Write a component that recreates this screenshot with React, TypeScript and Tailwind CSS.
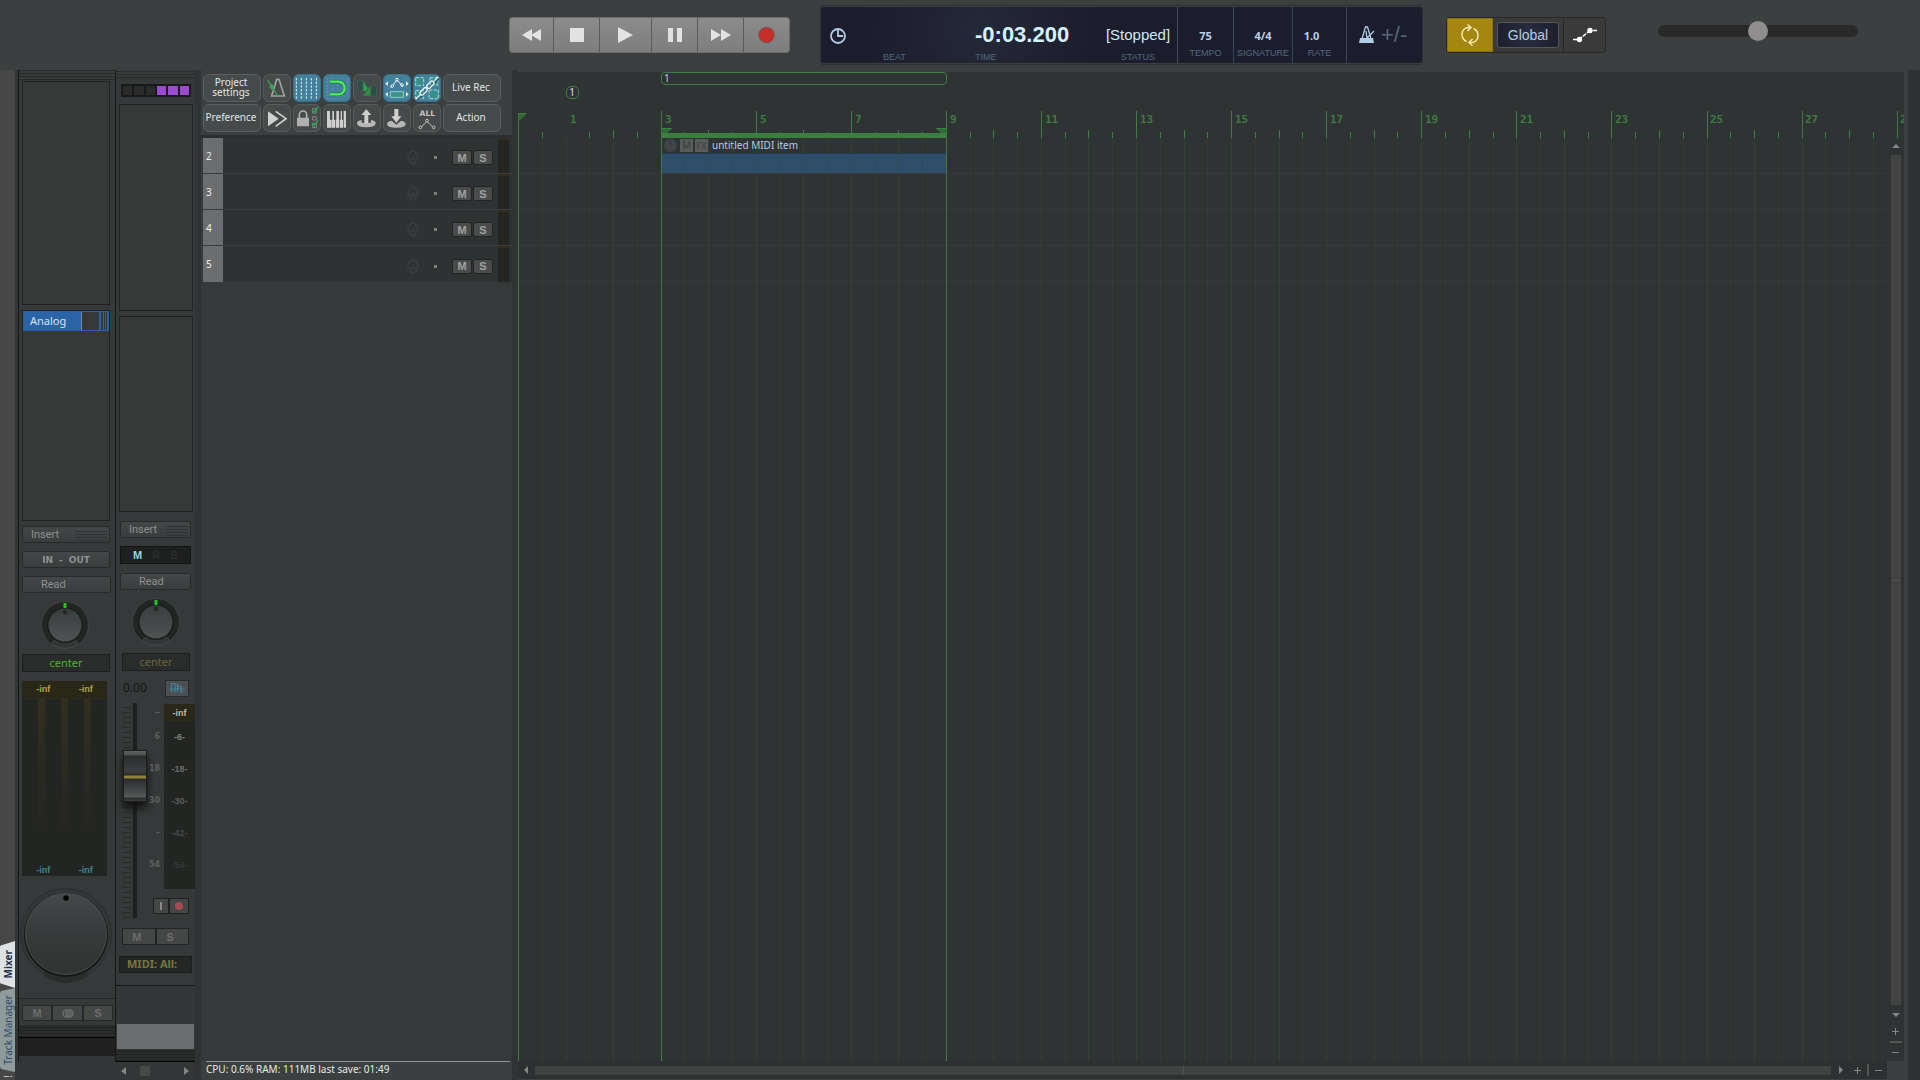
import { useState } from 'react';
import type { ReactNode } from 'react';

const BEAT = 23.77;
const beats = Array.from({ length: 160 }, (_, i) => i);
const bars = Array.from({ length: 14 }, (_, i) => i * 2 + 1);
const beatX = (i: number) => Math.round(i * BEAT) + 0.5;

const tracks = [2, 3, 4, 5];
const scaleMarks = ['6', '18', '30', '–', '54'];
const meterMarks = ['-6-', '-18-', '-30-', '-42-', '-54-'];
const meterShades = ['text-[#7d7d7d]', 'text-[#6d6d6d]', 'text-[#5c5e5d]', 'text-[#484b4a]', 'text-[#383a39]'];

const HATCH = 'bg-[repeating-linear-gradient(0deg,#2a2c2c_0px,#2a2c2c_1px,#383b3b_1px,#383b3b_3px)]';

/* ---------- transport ---------- */

function TransportButton({ label, width, children }: { label: string; width: string; children: ReactNode }) {
  return (
    <button
      aria-label={label}
      className={`${width} flex h-full items-center justify-center border-r border-[#5c5c5c] bg-linear-to-b from-[#8c8c8c] to-[#7d7d7d] last:border-r-0`}
    >
      {children}
    </button>
  );
}

function Transport() {
  return (
    <div className="flex h-9 overflow-hidden rounded-[3px] border border-[#6a6a6a]">
      <TransportButton label="Rewind" width="w-[44px]">
        <svg width="20" height="12" fill="#e2e2e2"><path d="M10 0v12L0 6zM19 0v12L9 6z" /></svg>
      </TransportButton>
      <TransportButton label="Stop" width="w-[46px]">
        <svg width="14" height="14" fill="#e2e2e2"><path d="M0 0h14v14H0z" /></svg>
      </TransportButton>
      <TransportButton label="Play" width="w-[52px]">
        <svg width="15" height="16" fill="#e2e2e2"><path d="M0 0l15 8L0 16z" /></svg>
      </TransportButton>
      <TransportButton label="Pause" width="w-[46px]">
        <svg width="14" height="14" fill="#e2e2e2"><path d="M0 0h5v14H0zM9 0h5v14H9z" /></svg>
      </TransportButton>
      <TransportButton label="Forward" width="w-[46px]">
        <svg width="20" height="12" fill="#e2e2e2"><path d="M0 0l10 6L0 12zM10 0l10 6-10 6z" /></svg>
      </TransportButton>
      <TransportButton label="Record" width="w-[45px]">
        <svg width="18" height="18"><circle cx="8.500" cy="9" r="7.8" fill="#c62f28" stroke="#6b5a5a" strokeWidth="1" /></svg>
      </TransportButton>
    </div>
  );
}

function ClockCell({ label, width, value }: { label: string; width: string; value: ReactNode }) {
  return (
    <div className={`${width} flex flex-col items-center justify-between border-r border-[#34465a] bg-[#1b1d2c] pt-[21px] pb-1`}>
      <span className="font-['Noto_Sans'] text-[11px] leading-4 font-bold text-[#bdd0ea]">{value}</span>
      <span className="text-[9px] leading-3 text-[#54687c]">{label}</span>
    </div>
  );
}

function Clock() {
  return (
    <div className="flex h-[60px] rounded-[3px] border border-[#2e3131] py-px">
      <div className="grid w-[357px] grid-cols-[62px_92px_120px_1fr] rounded-l-[3px] border-r border-[#3b4a55] bg-[radial-gradient(circle_at_45%_40%,#252838,#1b1d2c_60%)] pt-3 pb-1 text-[9px] leading-3 text-[#54687c]">
        <svg width="16" height="16" className="mt-[9px] ml-[9px]" fill="none" stroke="#b4cbe4" strokeWidth="1.8">
          <circle cx="8" cy="8" r="7" />
          <path d="M8 2v6h5" />
        </svg>
        <span className="self-end">BEAT</span>
        <div className="flex flex-col justify-between">
          <span className="text-[22px] leading-8 font-bold whitespace-nowrap text-[#d3f3ff]">-0:03.200</span>
          <span>TIME</span>
        </div>
        <div className="flex flex-col items-center justify-between pl-1">
          <span className="text-[15px] leading-8 text-[#d3e8f5]">[Stopped]</span>
          <span>STATUS</span>
        </div>
      </div>
      <ClockCell label="TEMPO" width="w-[56px]" value="75" />
      <ClockCell label="SIGNATURE" width="w-[59px]" value="4/4" />
      <ClockCell label="RATE" width="w-[54px]" value={<span className="pr-4">1.0</span>} />
      <button aria-label="Metronome" className="flex w-[75px] items-center gap-1.5 rounded-r-[3px] bg-[#1b1d2c] pl-3">
        <svg width="16" height="18" fill="none" stroke="#b4cbe4" strokeWidth="1.3">
          <path d="M2 16L6.500 1h2L13 16" />
          <path d="M1 12h13l1 5H0z" fill="#b4cbe4" stroke="none" />
          <path d="M7 5l1 7 7-7" />
        </svg>
        <span className="text-[22px] leading-6 text-[#54687c]">+/-</span>
      </button>
    </div>
  );
}

function GlobalGroup() {
  return (
    <div className="flex h-9 overflow-hidden rounded-[3px] border border-[#272727] bg-[#3a3a3a]">
      <button aria-label="Repeat" className="flex w-[46px] items-center justify-center border border-[#8b7310] bg-[#a48611]">
        <svg width="22" height="22" fill="none" stroke="#f6ecc0" strokeWidth="1.4">
          <path d="M7.500 17.500A7.600 7.600 0 0 1 6 4.500Q8 3.200 11.500 3.500" />
          <path d="M14.500 4.500A7.600 7.600 0 0 1 16 17.500Q14 18.800 10.500 18.500" />
          <path d="M8.500 .5l3.500 3-3.500 3.500M13.500 15l-3.500 3.500 3.500 3" />
        </svg>
      </button>
      <div className="flex w-[71px] items-center border-r border-[#272727] px-1">
        <button className="h-[26px] w-full rounded-[3px] border border-[#565656] bg-[radial-gradient(circle,#2a2f42,#1b1d2c)] text-[14px] leading-6 text-[#b4cbe4]">
          Global
        </button>
      </div>
      <button aria-label="Envelope mode" className="flex w-[41px] items-center justify-center">
        <svg width="24" height="16" stroke="#fff" strokeWidth="1.400" fill="#fff">
          <path d="M0 12.500h4M6 12.500L17 3.500M20 3.500h4" strokeDasharray="4 1" />
          <circle cx="6.500" cy="12.500" r="2" />
          <circle cx="17" cy="3.500" r="2" />
        </svg>
      </button>
    </div>
  );
}

function Header() {
  const [rate, setRate] = useState(50);
  return (
    <header className="flex h-[70px] shrink-0 items-center bg-[#3b3f3f] pl-[509px]">
      <Transport />
      <div className="ml-[30px]">
        <Clock />
      </div>
      <div className="ml-[23px]">
        <GlobalGroup />
      </div>
      <input
        type="range"
        aria-label="Play rate"
        value={rate}
        onChange={(e) => setRate(Number(e.target.value))}
        className="mb-2 ml-[52px] h-3 w-[200px] appearance-none rounded-full bg-[#292929] [&::-webkit-slider-thumb]:size-5 [&::-webkit-slider-thumb]:appearance-none [&::-webkit-slider-thumb]:rounded-full [&::-webkit-slider-thumb]:bg-[#8f8d8d]"
      />
    </header>
  );
}

/* ---------- mixer ---------- */

function Knob() {
  return (
    <svg width="50" height="48" viewBox="0 0 50 48" className="mx-auto shrink-0">
      <defs>
        <linearGradient id="knob" x1="0" y1="0" x2="0" y2="1">
          <stop offset="0" stopColor="#3a3d3e" />
          <stop offset="1" stopColor="#505254" />
        </linearGradient>
      </defs>
      <circle cx="25" cy="24" r="23.500" fill="#232424" stroke="#414444" />
      <path d="M13 40l-1 3.500a24 24 0 0 0 26 0L37 40z" fill="#333636" stroke="#4a4d4d" strokeWidth=".7" />
      <circle cx="25" cy="24" r="18" fill="#1b1c1c" />
      <circle cx="25" cy="24" r="16.500" fill="url(#knob)" />
      <circle cx="25" cy="11" r="2.300" fill="#262828" />
      <path d="M23.500 2h3v5h-3z" fill="#22c322" />
    </svg>
  );
}

function BigKnob() {
  return (
    <svg width="96" height="98" viewBox="0 0 96 98" className="mx-auto shrink-0">
      <defs>
        <linearGradient id="bigknob" x1="0" y1="0" x2="0" y2="1">
          <stop offset="0" stopColor="#454949" />
          <stop offset=".5" stopColor="#373a3a" />
          <stop offset="1" stopColor="#313333" />
        </linearGradient>
      </defs>
      <circle cx="48" cy="48" r="45.500" fill="#333636" stroke="#2c2f2f" />
      <path d="M28 84l-2 6q22 14 44 0l-2-6z" fill="#2b2d2d" />
      <circle cx="48" cy="49" r="42" fill="#161717" />
      <circle cx="48" cy="48" r="40.500" fill="url(#bigknob)" stroke="#565a5a" strokeWidth=".7" />
      <circle cx="48" cy="12" r="2.800" fill="#050505" />
    </svg>
  );
}

function StripButton({ children, className = '' }: { children: ReactNode; className?: string }) {
  return (
    <button
      className={`h-[17px] shrink-0 rounded-[2px] border border-[#282a2a] bg-linear-to-b from-[#444747] to-[#3a3d3d] font-['Roboto'] text-[11px] leading-[14px] text-[#8e9191] ${className}`}
    >
      {children}
    </button>
  );
}

function Grip({ width }: { width: string }) {
  return (
    <span className={`h-3 ${width} bg-[repeating-linear-gradient(0deg,#303333_0px,#303333_1px,transparent_1px,transparent_3px)]`} />
  );
}

function MasterMeter() {
  return (
    <div className="mt-[9px] flex h-[195px] w-[85px] shrink-0 flex-col bg-[#232523] text-[9px] font-bold">
      <div className="flex h-[18px] items-center justify-around border-b border-[#302c1c] bg-[#292818] pt-px text-[#aea452]">
        <span>-inf</span>
        <span>-inf</span>
      </div>
      <div className="flex flex-1 justify-between px-4">
        {[0, 1, 2].map((i) => (
          <div key={i} className="h-[140px] w-[7px] bg-linear-to-b from-[#322f1f] to-[#232523]" />
        ))}
      </div>
      <div className="flex h-3 items-center justify-around pt-px text-[#3d8693]">
        <span>-inf</span>
        <span>-inf</span>
      </div>
    </div>
  );
}

function MasterStrip() {
  return (
    <section aria-label="Master" className="flex w-[98px] flex-col border-x border-[#161717] bg-[#363939]">
      <div className={`h-[10px] shrink-0 ${HATCH}`} />
      <div className="flex flex-1 flex-col pt-px pl-[3px]">
        <div className="h-[224px] w-[88px] shrink-0 border border-[#202222] bg-[#373939]" />
        <div className="mt-[5px] w-[88px] flex-1 border border-[#202222] bg-[#373939]">
          <div className="flex h-5 border border-[#2a62a4]">
            <button className="w-[58px] border-r border-[#7d8a99] bg-[#2a64a6] pl-1.5 text-left font-['Noto_Sans'] text-[11px] leading-4 text-[#d5e3f5]">
              Analog
            </button>
            <span className="w-[17px]" />
            <span className="w-0.5 bg-[#2a62a4]" />
            <span className="ml-0.5 flex-1 bg-[repeating-linear-gradient(90deg,#2a62a4_0px,#2a62a4_1px,#303538_1px,#303538_2px)]" />
          </div>
        </div>
        <StripButton className="mt-[5px] flex w-[88px] items-center justify-between pr-0.5 pl-2">
          Insert <Grip width="w-8" />
        </StripButton>
        <StripButton className="mt-2 w-[88px]">
          <span className="flex justify-center gap-1.5 font-['DejaVu_Sans'] text-[9px] font-bold">
            <span>IN</span>
            <span>-</span>
            <span>OUT</span>
          </span>
        </StripButton>
        <StripButton className="mt-2 w-[89px] pl-[18px] text-left">Read</StripButton>
        <div className="mt-2 flex w-[86px]">
          <Knob />
        </div>
        <div className="mt-[5px] h-[18px] w-[88px] shrink-0 border border-[#1c1d1d] bg-[#2a2c2c] text-center font-['Noto_Sans'] text-[11px] leading-4 text-[#4bb32f]">
          center
        </div>
        <MasterMeter />
        <div className="mt-[10px] flex w-[88px] justify-center">
          <BigKnob />
        </div>
      </div>
      <div className="mt-[14px] flex shrink-0 border-t border-[#222424] pt-1.5 pl-[3px]">
        <button className="h-4 w-[30px] border border-[#262828] bg-[#454747] text-[11px] leading-3 font-bold text-[#6b6d6d]">M</button>
        <button aria-label="Mono" className="flex h-4 w-[31px] items-center justify-center border border-[#262828] bg-[#454747]">
          <svg width="12" height="9" fill="none" stroke="#6b6d6d" strokeWidth="1.500">
            <circle cx="4.500" cy="4.500" r="3.500" />
            <circle cx="7.500" cy="4.500" r="3.500" fill="#5d5f5f" />
          </svg>
        </button>
        <button className="h-4 w-[30px] border border-[#262828] bg-[#454747] text-[11px] leading-3 font-bold text-[#6b6d6d]">S</button>
      </div>
      <div className="mt-1 h-3 shrink-0 bg-[repeating-linear-gradient(0deg,#222424_0px,#222424_1px,#2b2d2d_1px,#2b2d2d_3px)]" />
      <div className="h-[19px] shrink-0 border-t border-black bg-[#202020]" />
      <div className="h-1.5 shrink-0 bg-[#333636]" />
    </section>
  );
}

function Fader() {
  const [level, setLevel] = useState(71);
  return (
    <div className="flex h-[215px] w-[33px] justify-end">
      <div className="h-full w-2 bg-[repeating-linear-gradient(180deg,#363939_0px,#363939_4px,#292b2b_4px,#292b2b_5px)]" />
      <input
        type="range"
        aria-label="Track volume"
        value={level}
        onChange={(e) => setLevel(Number(e.target.value))}
        className="-ml-2 h-[215px] w-6 appearance-none bg-[linear-gradient(90deg,transparent_10px,#1a1b1b_10px,#222_14px,transparent_14px)] [direction:rtl] [writing-mode:vertical-lr] [&::-webkit-slider-thumb]:h-[52px] [&::-webkit-slider-thumb]:w-6 [&::-webkit-slider-thumb]:appearance-none [&::-webkit-slider-thumb]:border [&::-webkit-slider-thumb]:border-[#1a1b1b] [&::-webkit-slider-thumb]:bg-[linear-gradient(180deg,#5f6364_0px,#4b4f50_4px,#2b2d2d_5px,#3c3f40_20px,#2a2c2c_24px,#8f8335_25px,#8f8335_27px,#2a2c2c_28px,#55595a_46px,#2a2c2c_47px,#3b3d3e_50px)] [&::-webkit-slider-thumb]:shadow-[0_6px_8px_#111]"
      />
      <span className="w-0.5" />
    </div>
  );
}

function TrackStrip() {
  return (
    <section aria-label="Track 1" className="flex w-[79px] flex-col bg-[#363939]">
      <div className={`h-2 shrink-0 ${HATCH}`} />
      <div className="flex flex-1 flex-col pt-1.5 pr-0.5 pl-[3px]">
        <div className="mx-0.5 flex h-[13px] shrink-0 gap-0.5 border-2 border-[#181919] bg-[#181919]">
          {[0, 1, 2].map((i) => (
            <span key={i} className="flex-1 bg-[#2b2b2b]" />
          ))}
          {[3, 4, 5].map((i) => (
            <span key={i} className="flex-1 bg-[#9a4bd0]" />
          ))}
        </div>
        <div className="mt-[7px] h-[207px] shrink-0 border border-[#202222] bg-[#373939]" />
        <div className="mt-[5px] flex-1 border border-[#202222] bg-[#373939]" />
        <StripButton className="mt-[9px] mr-0.5 ml-px flex items-center justify-between pr-0.5 pl-2">
          Insert <Grip width="w-[22px]" />
        </StripButton>
        <div className="mt-2 mr-0.5 ml-px flex h-[18px] shrink-0 gap-2.5 border border-[#141515] bg-[#1e2020] pl-3 text-[11px] leading-4 font-bold text-[#2b2d2e]">
          <span className="text-[#a9cbe2]">M</span>
          <span>R</span>
          <span>S</span>
        </div>
        <StripButton className="mt-[9px] mr-0.5 ml-px pl-[18px] text-left">Read</StripButton>
        <div className="mt-2 flex">
          <Knob />
        </div>
        <div className="mx-[3px] mt-[7px] h-[18px] shrink-0 border border-[#1c1d1d] bg-[#2a2c2c] text-center font-['Noto_Sans'] text-[11px] leading-4 text-[#68663a]">
          center
        </div>
        <div className="mx-1 mt-2 flex h-[18px] shrink-0 items-center justify-between">
          <span className="font-['Noto_Sans'] text-[12px] text-[#121313]">0.00</span>
          <button aria-label="Envelopes" className="flex h-[17px] w-6 items-center justify-center border border-[#2a2c2c] bg-[#4c5052]">
            <svg width="16" height="12" fill="none" stroke="#3f88a3" strokeWidth="1.200">
              <path d="M0 7h16" strokeWidth=".8" />
              <path d="M2.500 10V1.500H6V10M8.500 1.500V10M8.500 4.500H12V10h2" />
            </svg>
          </button>
        </div>
      </div>
      <div className="mt-1.5 flex shrink-0">
        <Fader />
        <div className="flex flex-1 flex-col">
          <div className="flex h-[186px] pt-px text-[9px] font-bold">
            <div className="w-[15px] pr-1 text-right text-[#5c5f5f]">
              <div className="h-[17px] leading-4">–</div>
              {scaleMarks.map((m) => (
                <div key={m} className="h-8 font-['DejaVu_Sans'] text-[8px] leading-8">{m}</div>
              ))}
            </div>
            <div className="flex-1 bg-[#232523] text-center">
              <div className="h-[17px] border-b border-[#302c1c] bg-[#292818] leading-[18px] text-[#b9b9b0]">-inf</div>
              {meterMarks.map((m, i) => (
                <div key={m} className={`h-8 leading-8 ${meterShades[i]}`}>{m}</div>
              ))}
            </div>
          </div>
          <div className="mt-[9px] ml-1 flex h-4">
            <button aria-label="Input monitor" className="flex w-4 items-center justify-center border border-[#1f2121] bg-[#454747]">
              <span className="h-2 w-0.5 bg-[#8a8a8a]" />
            </button>
            <button aria-label="Record arm" className="flex w-5 items-center justify-center border border-[#1f2121] bg-[#454747]">
              <span className="size-2 rounded-full bg-[#a64b50]" />
            </button>
          </div>
        </div>
      </div>
      <div className="mx-1.5 mt-[10px] flex h-[17px] shrink-0">
        <button className="w-1/2 border border-[#222424] bg-[#454747] pr-1 text-[11px] leading-3 font-bold text-[#6b6d6d]">M</button>
        <button className="w-1/2 border border-[#222424] bg-[#454747] pr-1 text-[11px] leading-3 font-bold text-[#6b6d6d]">S</button>
      </div>
      <div className="mx-[3px] mt-[11px] h-[17px] shrink-0 border border-[#1c1d1d] bg-[#252727] pl-[7px] font-['Noto_Sans'] text-[11px] leading-[14px] font-bold whitespace-nowrap text-[#77763f]">
        MIDI: All:
      </div>
      <div className="mt-3 h-[39px] shrink-0 border-t border-[#161717] bg-[#343737]" />
      <div className="mr-px ml-px h-[25px] shrink-0 bg-[#6a6c6d]" />
      <div className="h-[13px] shrink-0 border-b border-black bg-[repeating-linear-gradient(0deg,#222424_0px,#222424_1px,#2b2d2d_1px,#2b2d2d_3px)]" />
    </section>
  );
}

function Mixer() {
  return (
    <aside className="flex w-[195px] shrink-0 bg-[#333636]">
      <nav className="flex w-[15px] flex-col justify-end bg-[#474747] font-['Noto_Sans']">
        <button className="flex h-[47px] items-center justify-center rounded-l-md bg-[#dfe2e2] text-[#22304f] [clip-path:polygon(0_10%,100%_0,100%_100%,0_90%)]">
          <span className="rotate-180 text-[10px] leading-[14px] font-bold [writing-mode:vertical-rl]">Mixer</span>
        </button>
        <button className="flex h-[84px] items-center justify-center rounded-l-md bg-[#8e9b9a] text-[#2f4a6e] [clip-path:polygon(0_4%,100%_0,100%_100%,0_96%)]">
          <span className="rotate-180 text-[10px] leading-[14px] whitespace-nowrap [writing-mode:vertical-rl]">Track Manager</span>
        </button>
        <div className="flex h-2 items-center justify-center">
          <span className="rotate-180 text-[10px] leading-[14px] text-[#d5d5d5] [writing-mode:vertical-rl]">!</span>
        </div>
      </nav>
      <div className="flex flex-1 flex-col pl-[3px]">
        <div className="flex flex-1">
          <MasterStrip />
          <TrackStrip />
        </div>
        <div className="flex h-[18px] shrink-0 items-center justify-between pr-1.5 pl-[103px]">
          <svg width="5" height="8" fill="#848686"><path d="M5 0v8L0 4z" /></svg>
          <span className="mr-5 size-2.5 bg-[#484a4a]" />
          <svg width="5" height="8" fill="#848686"><path d="M0 0l5 4-5 4z" /></svg>
        </div>
      </div>
    </aside>
  );
}

/* ---------- track panel ---------- */

function TextTool({ children }: { children: ReactNode }) {
  return (
    <button className="flex items-center justify-center rounded-md border border-[#5a5f5f] bg-[#454a4a] pr-0.5 pb-0.5 font-['Noto_Sans'] text-[10px] leading-[10px] text-[#e3e6e6]">
      {children}
    </button>
  );
}

function IconTool({ label, active, children }: { label: string; active?: boolean; children: ReactNode }) {
  return (
    <button
      aria-label={label}
      className={`overflow-hidden rounded-md border ${active ? 'border-[#3a7189] bg-[#43809c]' : 'border-[#5a5c5c] bg-[#474a4a]'}`}
    >
      <svg viewBox="3 3 78 78" className="size-full" fill="none">
        {children}
      </svg>
    </button>
  );
}

function Toolbar() {
  return (
    <div className="grid h-[62px] grid-cols-[58px_repeat(6,28px)_58px] grid-rows-[28px_28px] gap-0.5 pt-1 pl-0.5">
      <TextTool>
        <span>Project<br />settings</span>
      </TextTool>
      <IconTool label="Metronome">
        <path d="M41 16h7l16 50H26z" stroke="#a0a0a0" strokeWidth="5" />
        <path d="M14 18l30 48" stroke="#35a552" strokeWidth="4" />
        <path d="M26 29l8 9-8 9-8-9z" fill="#35a552" />
      </IconTool>
      <IconTool label="Grid" active>
        <path d="M10 12v62M25 12v62M40 12v62M55 12v62M70 12v62" stroke="#e6f2f6" strokeWidth="3" strokeDasharray="7 4" />
      </IconTool>
      <IconTool label="Snap" active>
        <path d="M14 12v62M29 12v62M44 12v62M59 12v62M74 12v62" stroke="#73a9bf" strokeWidth="2" strokeDasharray="5 5" />
        <path d="M20 23h26a19 19 0 0 1 0 38H20" stroke="#2a6d4d" strokeWidth="11" />
        <path d="M20 23h26a19 19 0 0 1 0 38H20" stroke="#4af15c" strokeWidth="7" />
      </IconTool>
      <IconTool label="Auto crossfade">
        <path d="M13 20h17v30H13zM54 34h17v32H54z" fill="#2d4d48" stroke="#3c6b5d" strokeWidth="2" />
        <path d="M31 20v31h18z" fill="#2fa04d" />
        <path d="M53 32v34H29z" fill="#348c4a" stroke="#474a4a" strokeWidth="2" />
      </IconTool>
      <IconTool label="Move envelope with item" active>
        <path d="M15 22v14l-8-7zM69 22v14l8-7zM15 54v14l-8-7zM69 54v14l8-7z" fill="#eef5f7" />
        <path d="M22 39h4l3-3 12-18 14 14 4 6" stroke="#eef5f7" strokeWidth="3" />
        <circle cx="28" cy="36" r="4" fill="#43809c" stroke="#eef5f7" strokeWidth="3" />
        <circle cx="42" cy="17" r="4" fill="#43809c" stroke="#eef5f7" strokeWidth="3" />
        <circle cx="57" cy="33" r="4" fill="#43809c" stroke="#eef5f7" strokeWidth="3" />
        <path d="M22 53h40v17H22z" fill="#3f8f8c" stroke="#8fd0c6" strokeWidth="3" />
      </IconTool>
      <IconTool label="Item grouping" active>
        <path
          d="M8 11h24v24H8zM51 11h24v22H51zM8 50h24v24H8zM48 48h28v26H48z"
          fill="#37918a"
          stroke="#a5dbd0"
          strokeWidth="3"
          strokeDasharray="10 4"
        />
        <path d="M12 79L79 12" stroke="#2f6073" strokeWidth="6" />
        <g stroke="#eef5f7" strokeWidth="4">
          <path d="M8 76l14-14M64 20L76 8" />
          <rect x="-13" y="-6" width="26" height="12" rx="6" transform="translate(32 52) rotate(-46)" />
          <rect x="-13" y="-6" width="26" height="12" rx="6" transform="translate(52 32) rotate(-46)" />
        </g>
      </IconTool>
      <TextTool>Live Rec</TextTool>

      <TextTool>Preference</TextTool>
      <IconTool label="Scroll view">
        <path d="M15 22l32 22-32 23z" fill="#cfcfcf" />
        <path d="M38 22l31 22-31 23" stroke="#cfcfcf" strokeWidth="5" />
      </IconTool>
      <IconTool label="Lock">
        <path d="M12 41h36v26H12z" fill="#b0b0b0" />
        <path d="M19 42V32a11 11 0 0 1 22 0v10" stroke="#b0b0b0" strokeWidth="5" />
        <path d="M59 14h11v13H59zM59 38h11v10H59zM59 58h11v13H59z" stroke="#a0a0a0" strokeWidth="2" />
        <path d="M57 18l6 7 12-16M57 57l6 8 12-16" stroke="#2aa84a" strokeWidth="4" />
      </IconTool>
      <IconTool label="Virtual keyboard">
        <path d="M12 21h9v26h3v24H12zM28 21h5v26h3v24H25V47h3zM40 21h8v50H38V47h2zM53 21h4v26h3v24H50V47h3zM62 21h7v50H62z" fill="#cfcfcf" />
      </IconTool>
      <IconTool label="Export">
        <path d="M12 58q0-8 14-10v8h28v-8q14 2 14 10 0 12-28 12T12 58z" fill="#b8b8b8" />
        <path d="M40 16l15 17H46v24H34V33H25z" fill="#cfcfcf" />
      </IconTool>
      <IconTool label="Import">
        <path d="M12 60q0-8 14-10l14 12 14-12q14 2 14 10 0 11-28 11T12 60z" fill="#b8b8b8" />
        <path d="M34 15h12v22h9L40 56 25 37h9z" fill="#cfcfcf" />
      </IconTool>
      <IconTool label="Show all envelopes">
        <text x="43" y="36" textAnchor="middle" fontFamily="DejaVu Sans" fontWeight="bold" fontSize="23" fill="#c4c4c4">ALL</text>
        <path d="M22 72l20-20 20 20" stroke="#c4c4c4" strokeWidth="3" />
        <circle cx="22" cy="70" r="4" fill="#474a4a" stroke="#c4c4c4" strokeWidth="3" />
        <circle cx="42" cy="50" r="4" fill="#474a4a" stroke="#c4c4c4" strokeWidth="3" />
        <circle cx="62" cy="70" r="4" fill="#474a4a" stroke="#c4c4c4" strokeWidth="3" />
      </IconTool>
      <TextTool>Action</TextTool>
    </div>
  );
}

function TrackRow({ n }: { n: number }) {
  return (
    <li className="flex h-9 items-center border-b border-[#3a3d3d] bg-[#2f3232] last:border-b-0">
      <span className="h-full w-5 bg-[#6b6d6e] pl-[3px] font-['Noto_Sans'] text-[10px] leading-9 text-[#f0f0f0]">{n}</span>
      <span className="flex-1" />
      <svg width="12" height="15" className="mt-1" fill="none" stroke="#3a3e3e" strokeWidth="1.500">
        <path d="M1 6q5-10 10 0v3H1zM3 9v3l3 2 3-2V9" />
        <path d="M6 6v5" />
      </svg>
      <span className="mt-1 ml-[15px] size-[3px] bg-[#7c7e7e]" />
      <button className="mt-1 ml-[15px] h-[15px] w-5 rounded-[2px] border border-[#232525] bg-[#4a4c4c] text-[11px] leading-3 font-bold text-[#a0a2a2]">
        M
      </button>
      <button className="mt-1 ml-px h-[15px] w-5 rounded-[2px] border border-[#232525] bg-[#4a4c4c] text-[11px] leading-3 font-bold text-[#a0a2a2]">
        S
      </button>
      <span className="mr-[3px] ml-[5px] h-full w-[11px] border-t-2 border-[#332e1c] bg-[linear-gradient(90deg,#232523_4px,#2b291d_4px,#2b291d_6px,#232523_6px)]" />
    </li>
  );
}

function TrackPanel() {
  return (
    <section aria-label="Tracks" className="flex w-[323px] shrink-0 flex-col border-x-[6px] border-[#303333] bg-[#35393a]">
      <div className="h-[65px] bg-[#3b3f3f]">
        <Toolbar />
      </div>
      <ul className="border-t-[3px] border-[#2b2e2e] pl-0.5">
        {tracks.map((n) => (
          <TrackRow key={n} n={n} />
        ))}
      </ul>
      <div className="flex-1" />
      <div className="h-[19px] bg-[#3b3f3f] pr-0.5 pl-[5px]">
        <div className="border-t border-[#8f9393] font-['Noto_Sans'] text-[10px] leading-[15px] text-[#e6eaea]">
          CPU: 0.6% RAM: 111MB last save: 01:49
        </div>
      </div>
    </section>
  );
}

/* ---------- arrange view ---------- */

function Ruler() {
  return (
    <div className="relative h-[66px] shrink-0 overflow-hidden">
      <svg className="block h-full w-full" stroke="#3c7d40">
        {beats.slice(1).map((i) => {
          if (i === 2) return null;
          const top = i % 4 === 2 ? 39 : i % 2 === 0 ? 58 : 60;
          return <path key={i} d={`M${beatX(i)} ${top}V66`} />;
        })}
        <path d="M.5 41V66" />
        <path d="M0 41.500h8l-8 8z" fill="#2f6a36" />
        <path d="M143.500 66v-9.500h10l-6 5M428.500 66v-9.500h-10l6 5" fill="#2f6a36" />
        <path d="M143 63.500h286" strokeWidth="5" />
      </svg>
      <div className="absolute top-10 left-[52px] flex font-['DejaVu_Sans_Mono'] text-[11px] leading-4 font-bold text-[#3c7d40]">
        {bars.map((b) => (
          <span key={b} className="w-[95px] shrink-0">{b}</span>
        ))}
        <span>29</span>
      </div>
      <div className="absolute top-0 left-[143px] h-[13px] w-[286px] rounded-[4px] border border-[#3c7d40] pl-0.5 font-['Noto_Sans'] text-[10px] leading-[11px] text-[#c5cdd2]">
        1
      </div>
      <div className="absolute top-3.5 left-12 size-[13px] rounded-[5px] border border-[#3c7d40] pr-px text-center font-['Noto_Sans'] text-[10px] leading-[11px] text-[#e0e0e0]">
        1
      </div>
    </div>
  );
}

function MidiItem() {
  return (
    <div className="absolute top-0 left-[143px] flex h-9 w-[286px] flex-col">
      <div className="flex h-[15px] items-center gap-0.5 pl-[3px] font-['Noto_Sans'] text-[10px] leading-[13px]">
        <svg width="13" height="13"><circle cx="6.500" cy="6.500" r="6.500" fill="#424545" /><path d="M6.500 1v5" stroke="#2f3333" /></svg>
        <button className="ml-px h-[13px] w-[13px] bg-[#5a5c5c] text-[#3b3d3d]">M</button>
        <button className="h-[13px] w-[13px] bg-[#5a5c5c] text-[9px] text-[#3b3d3d]">FX</button>
        <span className="ml-0.5 text-[#b9cdea]">untitled MIDI item</span>
      </div>
      <div className="flex-1 rounded-[2px] border border-[#1e3a58] bg-[#2f4e6c]" />
    </div>
  );
}

function Canvas() {
  return (
    <div className="relative flex-1 overflow-hidden">
      <MidiItem />
      <svg className="relative block h-full w-full">
        <g stroke="#363a3a">
          {tracks.map((n) => (
            <line key={n} x1="0" x2="100%" y1={(n - 1) * 36 - 0.5} y2={(n - 1) * 36 - 0.5} />
          ))}
        </g>
        {beats.slice(1).map((i) => (
          <line key={i} x1={beatX(i)} x2={beatX(i)} y1="0" y2="100%" stroke={i % 2 ? '#2e4633' : '#315237'} strokeDasharray="1 1" />
        ))}
        <g stroke="#3c7d40">
          <line x1=".5" x2=".5" y1="0" y2="100%" />
          <line x1="143.500" x2="143.500" y1="0" y2="100%" />
          <line x1="428.500" x2="428.500" y1="0" y2="100%" />
        </g>
      </svg>
    </div>
  );
}

function Arrange() {
  return (
    <main className="flex min-w-0 flex-1 flex-col bg-[#2f3333]">
      <div className="h-0.5 shrink-0 bg-[#3b3f3f]" />
      <Ruler />
      <div className="flex min-h-0 flex-1">
        <Canvas />
        <div className="flex w-[17px] shrink-0 flex-col items-center pt-1.5">
          <svg width="8" height="4" fill="#848686"><path d="M4 0l4 4H0z" /></svg>
          <div className="mt-[7px] flex w-2.5 flex-1 items-center bg-[#434343]">
            <span className="h-px w-full bg-[#505050]" />
          </div>
          <svg width="12" height="56" stroke="#848686" fill="#848686">
            <path d="M2 8h8l-4 4z" stroke="none" />
            <path d="M2 26.500h7M5.500 23v7M2 47.500h7" />
            <path d="M0 37h12" stroke="#555" strokeWidth="2" />
          </svg>
        </div>
      </div>
      <div className="flex h-[19px] shrink-0 items-center border-b border-[#3b3f3f] bg-[#2d3030]">
        <svg width="17" height="8" fill="#848686"><path d="M10 0v8L6 4z" /></svg>
        <div className="flex h-[9px] flex-1 justify-center bg-[#414242]">
          <span className="h-full w-px bg-[#505050]" />
        </div>
        <svg width="56" height="12" stroke="#848686" fill="#848686">
          <path d="M8 2v8l4-4z" stroke="none" />
          <path d="M23 6.500h7M26.500 3v7M44 6.500h7" />
          <path d="M37 0v12" stroke="#555" strokeWidth="2" />
        </svg>
        <div className="h-full w-[17px] bg-[#3b3f3f]" />
      </div>
    </main>
  );
}

export default function App() {
  return (
    <div className="flex h-screen flex-col overflow-hidden bg-[#3b3f3f] font-['Liberation_Sans',sans-serif]">
      <Header />
      <div className="flex min-h-0 flex-1">
        <Mixer />
        <TrackPanel />
        <Arrange />
        <div className="w-4 shrink-0 border-l-4 border-[#3b3f3f] bg-[#2f3232]" />
      </div>
    </div>
  );
}
